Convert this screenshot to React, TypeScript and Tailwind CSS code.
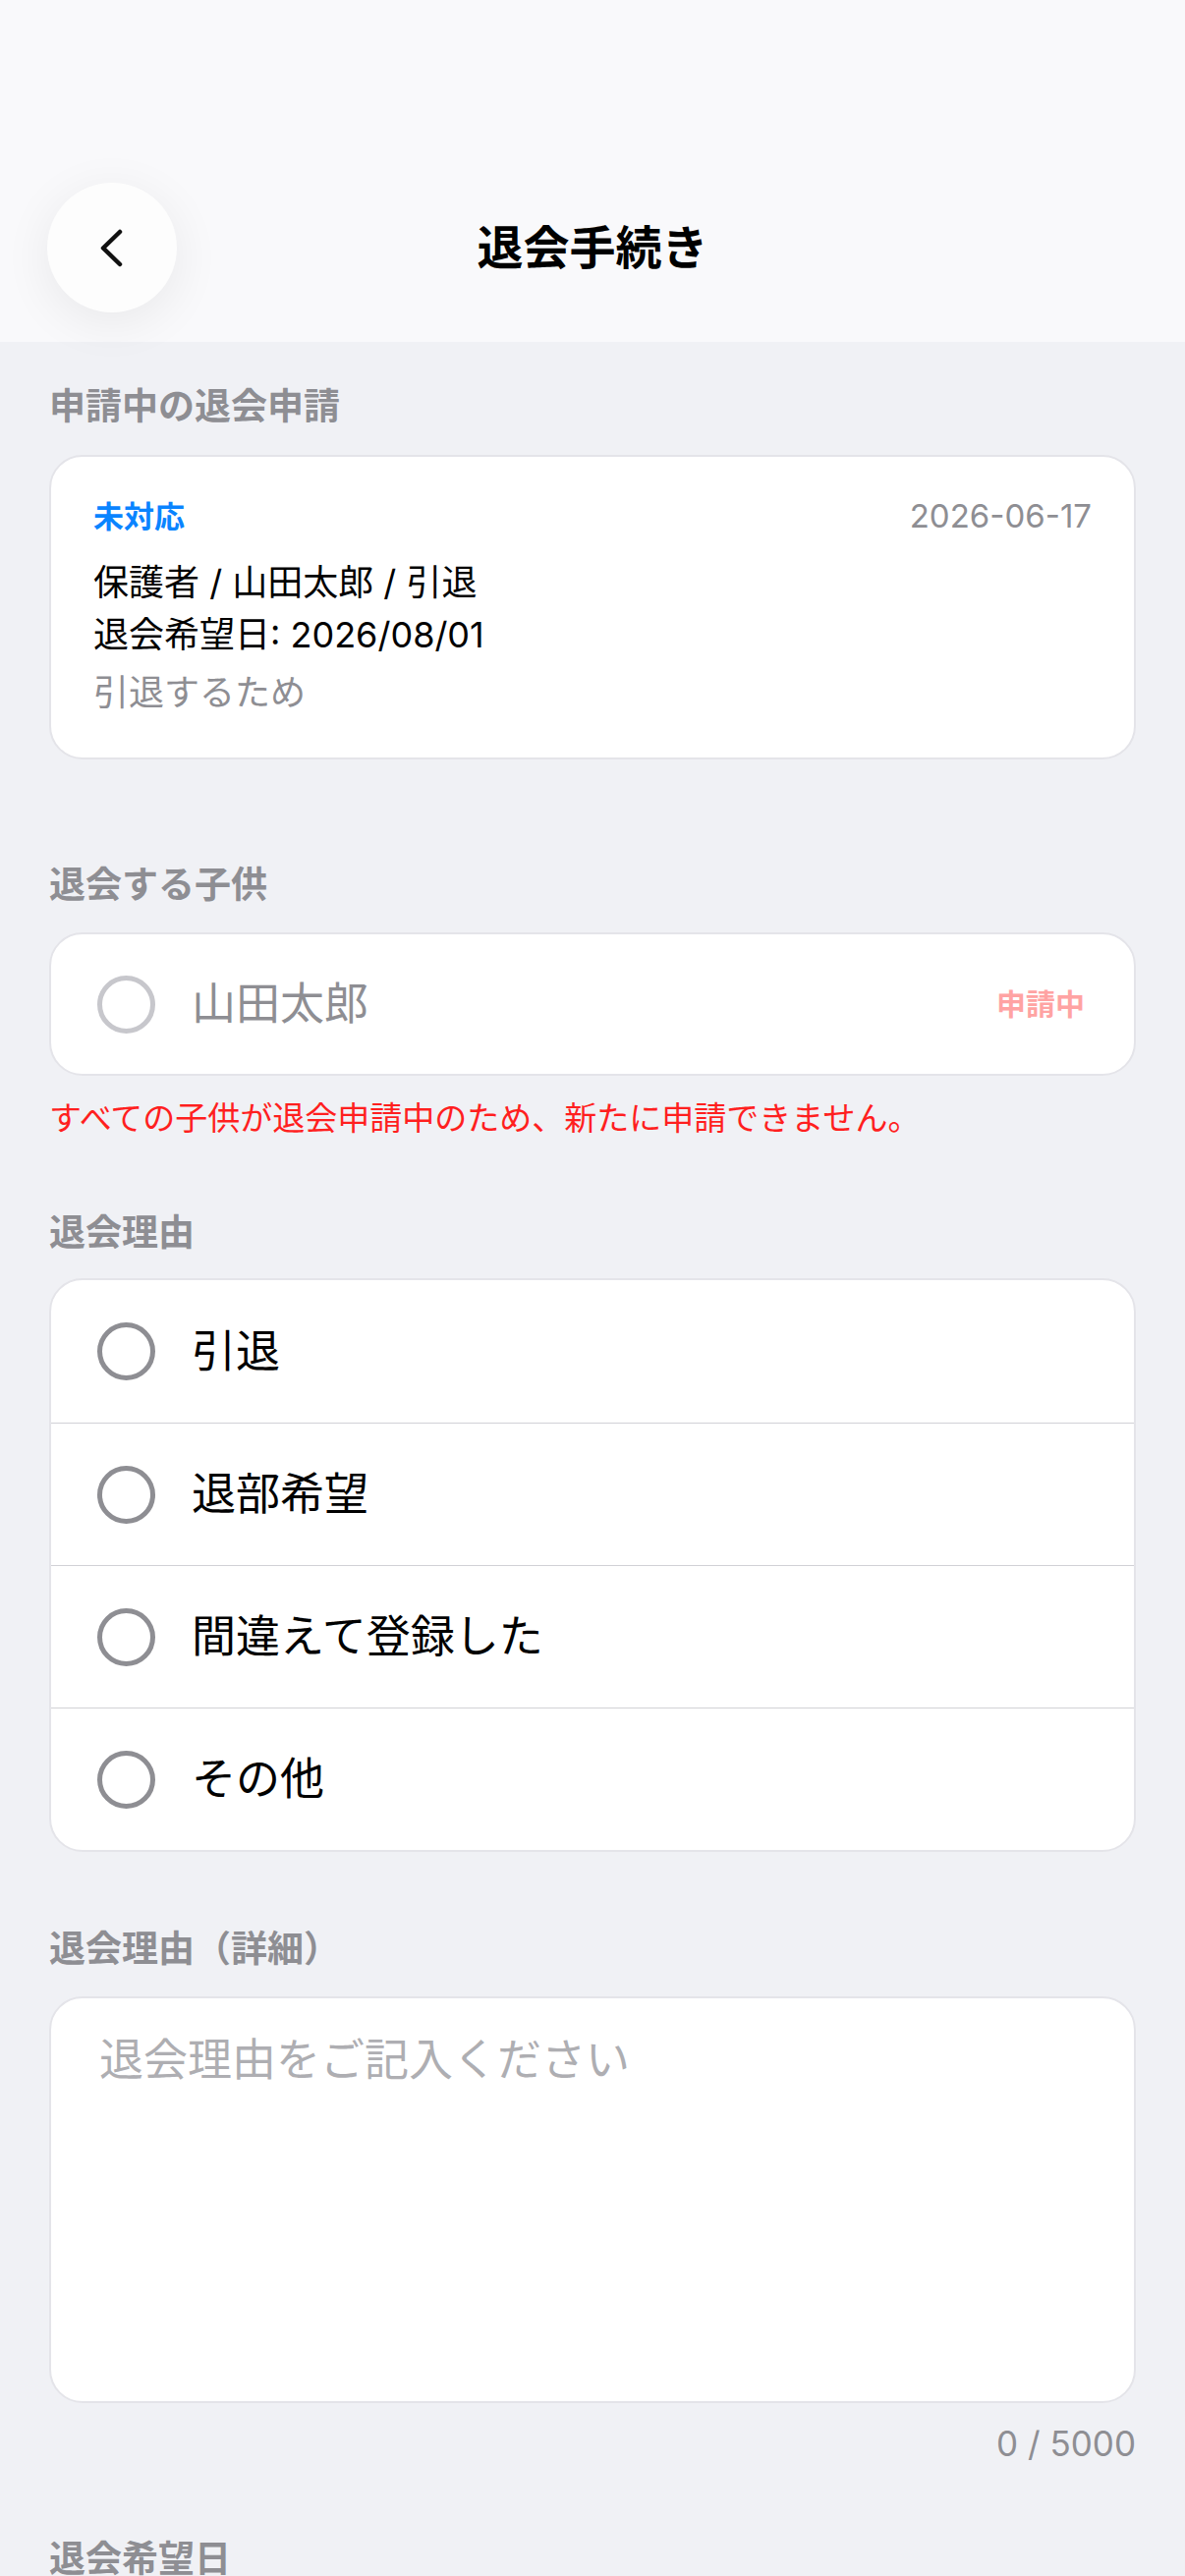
import React from "react";

const FONT = { fontFamily: '"Inter", "Noto Sans CJK JP", sans-serif' };

const reasons = ["引退", "退部希望", "間違えて登録した", "その他"];

function SectionLabel({ children, className = "" }: { children: React.ReactNode; className?: string }) {
  return (
    <p className={`text-[37px] font-bold leading-[48px] text-[#8e8e93] ${className}`}>{children}</p>
  );
}

function Radio({ disabled }: { disabled?: boolean }) {
  return (
    <span
      className={`block h-[59px] w-[59px] shrink-0 rounded-full border-[5px] ${
        disabled ? "border-[#c7c7cc]" : "border-[#8e8e93]"
      }`}
    />
  );
}

export default function App() {
  return (
    <div className="min-h-[2622px] w-[1206px] bg-[#f0f1f5]" style={FONT}>
      <header className="bg-[#f9f9fb] pb-[30px] pt-[186px]">
        <div className="grid h-[132px] grid-cols-[180px_1fr_180px] items-center">
          <div className="pl-[48px]">
            <button
              type="button"
              aria-label="戻る"
              className="flex h-[132px] w-[132px] items-center justify-center rounded-full bg-[#fdfdfd] shadow-[0_10px_50px_rgba(0,0,0,0.07)]"
            >
              <svg width="28" height="43" viewBox="0 0 28 43" fill="none">
                <path
                  d="M22 5 L5 21.5 L22 38"
                  stroke="#111"
                  strokeWidth="4.5"
                  strokeLinecap="round"
                  strokeLinejoin="round"
                />
              </svg>
            </button>
          </div>
          <h1 className="text-center text-[47px] font-bold leading-[60px] text-black">退会手続き</h1>
          <div />
        </div>
      </header>

      <main className="px-[50px] pb-[40px]">
        <SectionLabel className="pt-[42px]">申請中の退会申請</SectionLabel>
        <section className="mt-[25px] rounded-[34px] border-2 border-[#e4e4e9] bg-white px-[43px] pb-[39px] pt-[41px]">
          <div className="flex h-[40px] items-center justify-between">
            <span className="text-[31px] font-bold text-[#0a84ff]">未対応</span>
            <span className="text-[33px] text-[#8e8e93]">2026-06-17</span>
          </div>
          <p className="mt-[21px] text-[36px] leading-[53px] text-black">保護者 / 山田太郎 / 引退</p>
          <p className="text-[36px] leading-[53px] text-black">退会希望日: 2026/08/01</p>
          <p className="mt-[6px] text-[36px] leading-[53px] text-[#8e8e93]">引退するため</p>
        </section>

        <SectionLabel className="mt-[104px]">退会する子供</SectionLabel>
        <div className="mt-[24px] flex h-[146px] items-center rounded-[34px] border-2 border-[#e4e4e9] bg-white pl-[47px] pr-[50px]">
          <Radio disabled />
          <span className="ml-[37px] flex-1 text-[45px] text-[#8e8e93]">山田太郎</span>
          <span className="text-[30px] font-bold text-[#ffa3a3]">申請中</span>
        </div>
        <p className="mt-[21px] text-[33px] leading-[44px] text-[#ff1f1f]">
          すべての子供が退会申請中のため、新たに申請できません。
        </p>

        <SectionLabel className="mt-[71px]">退会理由</SectionLabel>
        <div className="mt-[22px] overflow-hidden rounded-[34px] border-2 border-[#e4e4e9] bg-white">
          {reasons.map((r, i) => (
            <div
              key={r}
              className={`flex h-[145px] items-center pl-[47px] ${i > 0 ? "border-t border-[#d1d1d6]" : ""}`}
            >
              <Radio />
              <span className="ml-[37px] text-[45px] text-black">{r}</span>
            </div>
          ))}
        </div>

        <SectionLabel className="mt-[75px]">退会理由（詳細）</SectionLabel>
        <textarea
          className="mt-[24px] block h-[414px] w-full resize-none rounded-[34px] border-2 border-[#e4e4e9] bg-white px-[49px] pt-[35px] text-[45px] leading-[56px] text-black outline-none placeholder:text-[#aeaeb2]"
          placeholder="退会理由をご記入ください"
          style={FONT}
        />
        <p className="mt-[19px] text-right text-[35px] leading-[44px] text-[#8e8e93]">0 / 5000</p>

        <SectionLabel className="mt-[72px]">退会希望日</SectionLabel>
      </main>
    </div>
  );
}
